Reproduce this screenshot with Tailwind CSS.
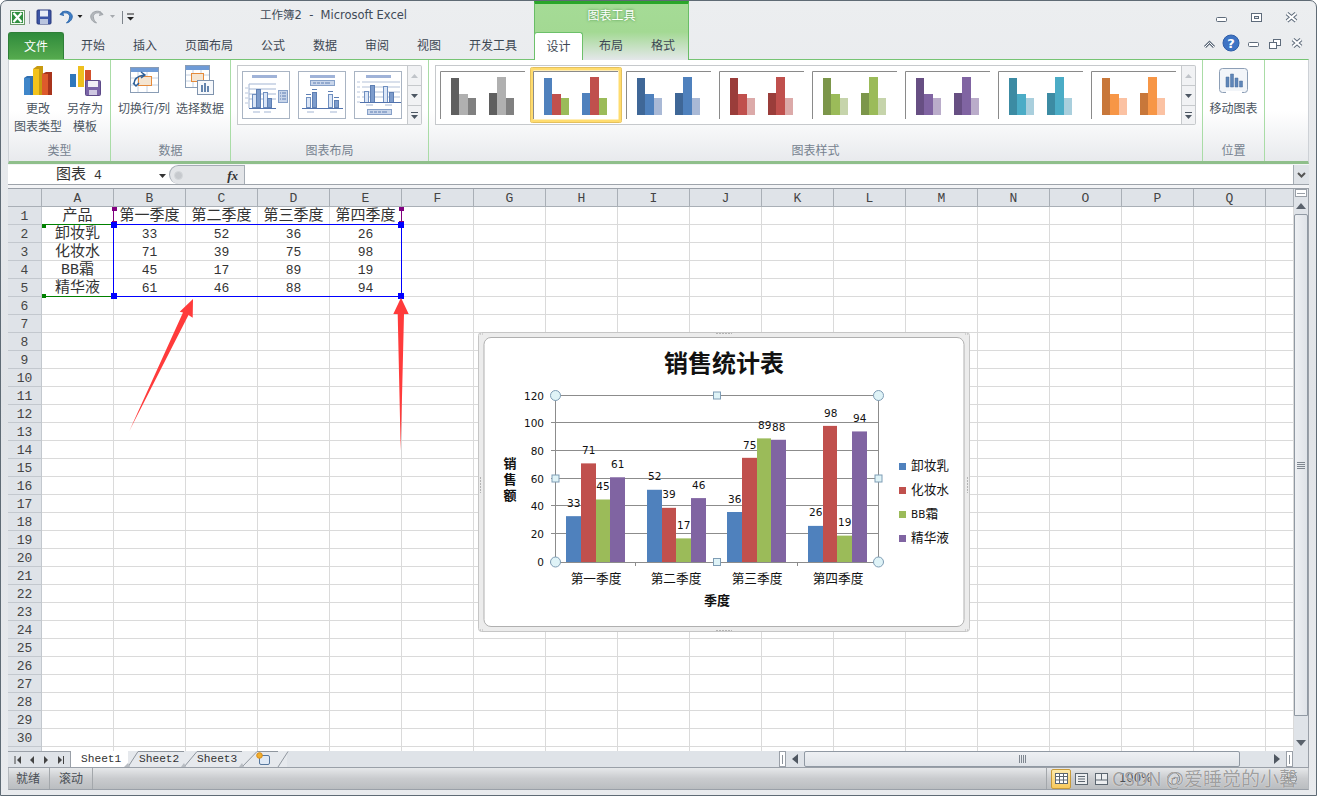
<!DOCTYPE html>
<html lang="zh-CN">
<head>
    <meta charset="UTF-8">
    <title>工作簿2 - Microsoft Excel</title>
    <script src="https://cdn.jsdelivr.net/npm/@tailwindcss/browser@4"></script>
</head>
<body class="w-[1317px] h-[797px] overflow-hidden bg-white font-['DejaVu_Sans','Noto_Sans_CJK_SC',sans-serif] text-[12px] text-[#44505e]">
<div class="relative w-[1317px] h-[797px]">
    <!-- window frame -->
    <div class="relative h-[796px] border border-[#5f6b75] rounded-t-[7px] px-[7px] bg-gradient-to-b from-[#eceef0] via-[#e0e3e7] to-[#e9ebee] flex flex-col">

        <!-- chart tools context tab -->
        <div class="absolute left-[533px] top-0 w-[155px] h-[59px] border-x border-[#69bd66] border-t-[3px] border-t-[#2aa62a] bg-gradient-to-b from-[#a5db96] via-[#a3d993] to-[#e4e7ea] text-center">
            <span class="block mt-[3px] text-white text-[12px] leading-[18px] [text-shadow:0_0_3px_#3d8a3d]">图表工具</span>
        </div>

        <!-- title row -->
        <div class="relative h-[31px] flex items-center shrink-0">
            <div class="w-[252px] shrink-0 flex">
                <svg width="130" height="20" viewBox="8 9 130 20">
                    <rect x="10.5" y="12.5" width="14" height="14" fill="#f4faf2" stroke="#6b9a6b"/>
                    <rect x="12" y="14" width="11" height="11" fill="#2f8f3f"/>
                    <path d="M13.5 15l8 9M21.5 15l-8 9" stroke="#fff" stroke-width="2.2"/>
                    <path d="M29.5 13v13" stroke="#a4a9ae"/>
                    <rect x="37" y="12" width="14" height="14" rx="1" fill="#3c55a5" stroke="#29397c"/>
                    <rect x="40" y="12.5" width="8" height="6" fill="#e8edf6"/>
                    <rect x="40" y="21" width="8" height="5" fill="#b9c4de"/>
                    <path d="M63 13.5l-3 3 4 1M60.5 16c6-3 10 0 9 4-.4 2-1.5 3.5-3 5 4-1 6-4 5.700-7-.5-4-6-6-10-4" fill="#3f7fc7" stroke="#2f69ad"/>
                    <path d="M77.500 17h5l-2.500 3z" fill="#222"/>
                    <path d="M102 13.500l3 3-4 1M104.500 16c-6-3-10 0-9 4 .4 2 1.500 3.500 3 5-4-1-6-4-5.700-7 .5-4 6-6 10-4" fill="#b5b9bd" stroke="#a0a5aa" transform="translate(-2 0)"/>
                    <path d="M110 17h5l-2.500 3z" fill="#a6aaae"/>
                    <path d="M122.500 13v13" stroke="#7d848b"/>
                    <path d="M127 16h7" stroke="#222"/>
                    <path d="M127 19h7l-3.500 3.500z" fill="#222"/>
                </svg>
            </div>
            <span class="mt-[-1px] text-[11.500px] whitespace-pre text-[#3f4a57]">工作簿2  -  Microsoft Excel</span>
            <svg class="ml-auto mr-[5px]" width="90" height="20" viewBox="1214 8 90 20">
                <rect x="1216.500" y="18.500" width="10" height="4" rx="1" fill="#fff" stroke="#5e6b7b"/>
                <rect x="1251.500" y="14.500" width="10" height="8" fill="#fff" stroke="#5e6b7b"/>
                <rect x="1254.500" y="17.500" width="4" height="2" fill="#e4e7ea" stroke="#5e6b7b"/>
                <path d="M1287 14.500l9 7.500M1296 14.500l-9 7.500" stroke="#5e6b7b" stroke-width="4"/>
                <path d="M1287 14.500l9 7.500M1296 14.500l-9 7.500" stroke="#fff" stroke-width="2"/>
            </svg>
        </div>

        <!-- tab row -->
        <div class="relative z-10 h-[27px] flex shrink-0 text-[12px] leading-[28px] text-[#3d4753]">
            <div class="w-[56px] h-[27px] text-center text-white rounded-t-[3px] border border-[#2f7f38] border-b-0 bg-gradient-to-b from-[#2f8b3c] to-[#55aa4e]">文件</div>
            <div class="w-[3px]"></div>
            <div class="w-[52px] text-center">开始</div>
            <div class="w-[52px] text-center">插入</div>
            <div class="w-[76px] text-center">页面布局</div>
            <div class="w-[52px] text-center">公式</div>
            <div class="w-[52px] text-center">数据</div>
            <div class="w-[52px] text-center">审阅</div>
            <div class="w-[52px] text-center">视图</div>
            <div class="w-[76px] text-center">开发工具</div>
            <div class="w-[3px]"></div>
            <div class="w-[49px] h-[28px] text-center bg-white border border-[#6cc06a] border-b-0 rounded-t-[3px]">设计</div>
            <div class="w-[2px]"></div>
            <div class="w-[52px] text-center">布局</div>
            <div class="w-[52px] text-center">格式</div>
            <svg class="ml-auto mr-[5px]" width="102" height="22" viewBox="1203 34 102 22">
                <path d="M1206 49l4.500-4.500 4.500 4.500" fill="none" stroke="#5e6b7b" stroke-width="3"/>
                <path d="M1206 49l4.500-4.500 4.500 4.500" fill="none" stroke="#fff" stroke-width="1"/>
                <circle cx="1232" cy="45" r="8" fill="#3f74c4" stroke="#2f5ea8"/>
                <text x="1232" y="50" text-anchor="middle" font-size="13" font-weight="700" fill="#fff">?</text>
                <rect x="1249.500" y="44.500" width="10" height="4" rx="1" fill="#fff" stroke="#5e6b7b"/>
                <rect x="1274.500" y="41.500" width="7" height="6" fill="#fff" stroke="#5e6b7b"/>
                <rect x="1270.500" y="44.500" width="7" height="6" fill="#fff" stroke="#5e6b7b"/>
                <path d="M1294 41.500l8 7M1302 41.500l-8 7" stroke="#5e6b7b" stroke-width="4"/>
                <path d="M1294 41.500l8 7M1302 41.500l-8 7" stroke="#fff" stroke-width="2"/>
            </svg>
        </div>

        <!-- ribbon -->
        <div class="h-[105px] shrink-0 flex border-t border-t-[#76c473] border-b-[3px] border-b-[#8fbf8b] border-x border-x-[#cdd1d6] bg-gradient-to-b from-white via-white to-[#e8eaed] text-[#4b5561]">
            <!-- 类型 -->
            <div class="w-[102px] shrink-0 flex flex-col border-r border-[#a9dca6]">
                <div class="h-[82px] flex gap-[5px] pl-[5px] pt-[4px] leading-[18px] text-center">
                    <div class="w-[48px] flex flex-col items-center">
                        <svg class="h-[35px] mb-px shrink-0" width="30" height="35" viewBox="23 64 30 35">
                            <path d="M24 78l3-2h6v19h-9z" fill="#2f6fb0"/><path d="M24 78h6v17h-6z" fill="#3f86c9"/>
                            <path d="M33 69l4-3h6v29H33z" fill="#c79a10"/><path d="M33 69h6v26h-6z" fill="#f2c21c"/>
                            <path d="M42 74l4-2h6v23H42z" fill="#a8341c"/><path d="M42 74h6v21h-6z" fill="#dd5a2c"/>
                        </svg>
                        <span>更改</span>
                        <span class="whitespace-nowrap">图表类型</span>
                    </div>
                    <div class="w-[36px] flex flex-col items-center">
                        <svg class="h-[35px] mb-px shrink-0" width="32" height="35" viewBox="69 64 32 35">
                            <path d="M70 74h6v13h-6z" fill="#2f78bd"/>
                            <path d="M78 66h6v21h-6z" fill="#eec01e"/>
                            <path d="M85 70h6v15h-6z" fill="#d2502c"/>
                            <rect x="85.500" y="80.500" width="15" height="15" rx="1" fill="#7a64a8" stroke="#5d4a88"/>
                            <rect x="88" y="81" width="10" height="6" fill="#f0eef6"/>
                            <rect x="89" y="90" width="8" height="5" fill="#cfc8e2"/>
                        </svg>
                        <span class="whitespace-nowrap">另存为</span>
                        <span>模板</span>
                    </div>
                </div>
                <div class="h-[19px] leading-[19px] text-center text-[#76828f]">类型</div>
            </div>
            <!-- 数据 -->
            <div class="w-[120px] shrink-0 flex flex-col border-r border-[#a9dca6]">
                <div class="h-[82px] flex gap-[6px] pl-[7px] pt-[4px] leading-[18px] text-center">
                    <div class="w-[52px] flex flex-col items-center">
                        <svg class="h-[35px] mb-px shrink-0" width="30" height="35" viewBox="129 64 30 35">
                            <rect x="130.500" y="67.500" width="28" height="25" fill="#fff" stroke="#8a9db5"/>
                            <rect x="131" y="68" width="27" height="4" fill="#6f9bd6"/>
                            <path d="M138 72v20M147 72v20M131 78h27M131 85h27" stroke="#c6d2e2"/>
                            <rect x="138.500" y="76.500" width="13" height="9" fill="#f4e5d2" stroke="#e58a3a"/>
                            <path d="M134 84c0-5 4-8 10-9M141 72l4 3-4 3" fill="none" stroke="#2f6099" stroke-width="1.500"/>
                            <path d="M133 83l3 3 3-3" fill="none" stroke="#2f6099" stroke-width="1.500"/>
                        </svg>
                        <span class="whitespace-nowrap">切换行/列</span>
                    </div>
                    <div class="w-[48px] flex flex-col items-center">
                        <svg class="h-[35px] mb-px shrink-0" width="30" height="35" viewBox="185 64 30 35">
                            <rect x="185.500" y="65.500" width="24" height="22" fill="#fff" stroke="#8a9db5"/>
                            <rect x="186" y="66" width="23" height="4" fill="#6f9bd6"/>
                            <path d="M193 70v17M201 70v17M186 75h23M186 81h23" stroke="#c6d2e2"/>
                            <rect x="191.500" y="73.500" width="12" height="8" fill="#f4e5d2" stroke="#e58a3a"/>
                            <rect x="197.500" y="80.500" width="16" height="14" fill="#f6f8fb" stroke="#7f93ad"/>
                            <path d="M201 85h2v7h-2zM204 83h2v9h-2zM207 86h2v6h-2z" fill="#6484ad"/>
                        </svg>
                        <span class="whitespace-nowrap">选择数据</span>
                    </div>
                </div>
                <div class="h-[19px] leading-[19px] text-center text-[#76828f]">数据</div>
            </div>
            <!-- 图表布局 -->
            <div class="w-[198px] shrink-0 flex flex-col border-r border-[#a9dca6]">
                <div class="h-[82px] pl-[6px] pt-[5px]">
                    <div class="w-[185px] h-[60px] flex">
                        <div class="w-[171px] h-[60px] border border-[#c6c9cc] bg-white">
                            <svg width="169" height="58" viewBox="238 66 169 58">
                                <g fill="none" stroke="#a9b4c3"><rect x="242.500" y="71.500" width="47" height="47"/><rect x="298.500" y="71.500" width="47" height="47"/><rect x="354.500" y="71.500" width="47" height="47"/></g>
                                <!-- layout 1 -->
                                <rect x="252" y="75" width="25" height="3" fill="#a0b3d8"/>
                                <path d="M249 84h27M249 89h27M249 94h27M249 99h27M249 84v24" stroke="#a3b5d3" fill="none"/>
                                <path d="M245 88h3M245 93h3M245 98h3M245 103h3" stroke="#b9c6dc"/>
                                <rect x="252.500" y="94.500" width="4" height="13" fill="#dbe6f7" stroke="#6f8fc0"/>
                                <rect x="256.500" y="89.500" width="4" height="18" fill="#7d9ccc" stroke="#5e7fb3"/>
                                <rect x="263.500" y="92.500" width="4" height="15" fill="#dbe6f7" stroke="#6f8fc0"/>
                                <rect x="267.500" y="98.500" width="4" height="9" fill="#7d9ccc" stroke="#5e7fb3"/>
                                <path d="M249 108.500h27" stroke="#5273ad"/>
                                <path d="M253 112h7M264 112h7" stroke="#a3b5d3"/>
                                <rect x="278.500" y="90.500" width="9" height="12" fill="#c8d5ea" stroke="#86a0c8"/>
                                <path d="M280 93h1M282 93h4M280 96h1M282 96h4M280 99h1M282 99h4" stroke="#5e7fb3"/>
                                <!-- layout 2 -->
                                <rect x="310" y="75" width="25" height="3" fill="#a0b3d8"/>
                                <rect x="310.500" y="80.500" width="24" height="5" fill="#c8d5ea" stroke="#86a0c8"/>
                                <path d="M313 83h3M317 83h3M321 83h3M325 83h5" stroke="#5e7fb3"/>
                                <rect x="306.500" y="97.500" width="4" height="10" fill="#dbe6f7" stroke="#6f8fc0"/>
                                <rect x="312.500" y="92.500" width="4" height="15" fill="#7d9ccc" stroke="#5e7fb3"/>
                                <rect x="328.500" y="94.500" width="4" height="13" fill="#dbe6f7" stroke="#6f8fc0"/>
                                <rect x="334.500" y="100.500" width="4" height="7" fill="#7d9ccc" stroke="#5e7fb3"/>
                                <path d="M306 94.500h5M312 89.500h5M328 91.500h5M334 97.500h5" stroke="#5e7fb3"/>
                                <path d="M302 108.500h41" stroke="#5273ad"/>
                                <path d="M307 112h7M330 112h7" stroke="#a3b5d3"/>
                                <!-- layout 3 -->
                                <rect x="366" y="75" width="25" height="3" fill="#a0b3d8"/>
                                <path d="M362 82h38M362 87h38M362 92h38M362 97h38" stroke="#b3c1d8"/>
                                <path d="M357 82h3M357 87h3M357 92h3M357 97h3M357 102h3" stroke="#b9c6dc"/>
                                <rect x="364.500" y="91.500" width="4" height="11" fill="#dbe6f7" stroke="#6f8fc0"/>
                                <rect x="370.500" y="85.500" width="4" height="17" fill="#7d9ccc" stroke="#5e7fb3"/>
                                <rect x="383.500" y="86.500" width="4" height="16" fill="#dbe6f7" stroke="#6f8fc0"/>
                                <rect x="389.500" y="92.500" width="4" height="10" fill="#7d9ccc" stroke="#5e7fb3"/>
                                <path d="M360 102.500h41" stroke="#5273ad"/>
                                <path d="M366 105h7M385 105h7" stroke="#a3b5d3"/>
                                <rect x="367.500" y="109.500" width="24" height="5" fill="#c8d5ea" stroke="#86a0c8"/>
                                <path d="M370 112h3M374 112h3M378 112h3M382 112h5" stroke="#5e7fb3"/>
                            </svg>
                        </div>
                        <div class="w-[14px] h-[60px] flex flex-col border border-l-0 border-[#c6c9cc] rounded-r-[2px] bg-[#f1f2f4]">
                            <div class="h-[20px] flex items-center justify-center border-b border-[#c6c9cc]"><svg width="7" height="4"><path d="M0 4h7L3.500 0z" fill="#c0c4c9"/></svg></div>
                            <div class="h-[20px] flex items-center justify-center border-b border-[#c6c9cc]"><svg width="7" height="4"><path d="M0 0h7L3.500 4z" fill="#4d5763"/></svg></div>
                            <div class="h-[18px] flex items-center justify-center"><svg width="7" height="7"><path d="M0 .5h7" stroke="#4d5763"/><path d="M0 3h7L3.500 7z" fill="#4d5763"/></svg></div>
                        </div>
                    </div>
                </div>
                <div class="h-[19px] leading-[19px] text-center text-[#76828f]">图表布局</div>
            </div>
            <!-- 图表样式 -->
            <div class="w-[774px] shrink-0 flex flex-col border-r border-[#a9dca6]">
                <div class="h-[82px] pl-[6px] pt-[5px]">
                    <div class="w-[761px] h-[60px] flex">
                        <div class="w-[747px] h-[60px] border border-[#c6c9cc] bg-white">
                            <svg id="styleThumbs" width="745" height="58" viewBox="436 66 745 58"></svg>
                        </div>
                        <div class="w-[14px] h-[60px] flex flex-col border border-l-0 border-[#c6c9cc] rounded-r-[2px] bg-[#f1f2f4]">
                            <div class="h-[20px] flex items-center justify-center border-b border-[#c6c9cc]"><svg width="7" height="4"><path d="M0 4h7L3.500 0z" fill="#c0c4c9"/></svg></div>
                            <div class="h-[20px] flex items-center justify-center border-b border-[#c6c9cc]"><svg width="7" height="4"><path d="M0 0h7L3.500 4z" fill="#4d5763"/></svg></div>
                            <div class="h-[18px] flex items-center justify-center"><svg width="7" height="7"><path d="M0 .5h7" stroke="#4d5763"/><path d="M0 3h7L3.500 7z" fill="#4d5763"/></svg></div>
                        </div>
                    </div>
                </div>
                <div class="h-[19px] leading-[19px] text-center text-[#76828f]">图表样式</div>
            </div>
            <!-- 位置 -->
            <div class="w-[62px] shrink-0 flex flex-col border-r border-[#a9dca6]">
                <div class="h-[82px] pt-[4px] leading-[18px] text-center flex flex-col items-center">
                    <svg class="h-[35px] mb-px shrink-0" width="32" height="35" viewBox="1218 64 32 35">
                        <rect x="1219.500" y="68.500" width="28" height="24" rx="3" fill="#f2f5f9" stroke="#8d9fb6"/>
                        <path d="M1226 92.500h16" stroke="#fff" stroke-width="3"/>
                        <path d="M1226 87V77h3v10zM1230.500 87V74h3v13zM1235 87V78h3v9zM1239.500 87v-6h3v6z" fill="#5f86b8" stroke="#4a6f9f" stroke-width=".5"/>
                    </svg>
                    <span class="whitespace-nowrap">移动图表</span>
                </div>
                <div class="h-[19px] leading-[19px] text-center text-[#76828f]">位置</div>
            </div>
        </div>

        <!-- formula bar -->
        <div class="h-[24px] shrink-0 pt-px bg-[#f3f4f6]">
            <div class="h-[20px] flex bg-white border-b border-[#9ea4ab]">
                <div class="w-[161px] shrink-0 flex items-center pl-[48px] pt-[2px] font-['Liberation_Mono','Noto_Sans_CJK_SC',monospace] text-[15px] leading-[18px] text-[#333]">
                    <span>图表</span><span class="ml-[8px] text-[13px]">4</span>
                    <svg class="ml-auto mr-[3px]" width="7" height="4"><path d="M0 0h7L3.500 4z" fill="#333"/></svg>
                </div>
                <div class="w-[76px] shrink-0 flex items-center justify-between rounded-l-[10px] border border-[#a5acb4] border-b-0 bg-[#e3e5e8] pl-[4px] pr-[6px]">
                    <span class="w-[9px] h-[9px] rounded-full bg-[#c6c9cd] border border-[#d4d7da]"></span>
                    <span class="font-['Liberation_Serif',serif] italic font-bold text-[13px] leading-[13px] text-[#333]">fx</span>
                </div>
                <div class="flex-1"></div>
                <div class="w-[16px] shrink-0 flex items-center justify-center bg-[#dfe3e8] border-l border-[#a5acb4]">
                    <svg width="9" height="6"><path d="M1 1l3.500 3.500L8 1" fill="none" stroke="#555" stroke-width="2"/></svg>
                </div>
            </div>
        </div>

        <!-- sheet + vertical scrollbar -->
        <div class="h-[563px] shrink-0 flex border-t border-[#9aa0a8]">
            <div id="sheet" class="w-[1286px] h-[562px] shrink-0 overflow-hidden grid grid-cols-[34px_repeat(17,72px)_28px] auto-rows-[18px] bg-white font-['Liberation_Mono','Noto_Sans_CJK_SC',monospace] text-[#333]"></div>
            <div class="w-[15px] h-[562px] flex flex-col bg-[#dfe3e8] border-r border-[#9aa0a8]">
                <div class="h-[8px] mx-[1px] bg-white border border-[#9aa0a8] flex items-center justify-center"><span class="w-[8px] h-px bg-[#9aa0a8]"></span></div>
                <div class="h-[17px] flex items-center justify-center"><svg width="10" height="6"><path d="M0 6h10L5 0z" fill="#5a626c"/></svg></div>
                <div class="h-[502px] rounded-t-[2px] border border-[#9099a3] border-r-[#9099a3] bg-gradient-to-r from-[#eef0f3] to-[#dfe3e8] flex items-center justify-center">
                    <svg width="8" height="7"><path d="M0 .5h8M0 2.500h8M0 4.500h8M0 6.500h8" stroke="#7f8790"/></svg>
                </div>
                <div class="flex-1 flex items-end justify-center pb-[5px]"><svg width="10" height="6"><path d="M0 0h10L5 6z" fill="#5a626c"/></svg></div>
            </div>
        </div>

        <!-- sheet tabs + horizontal scrollbar -->
        <div class="h-[17px] shrink-0 flex bg-[#dfe3e8] border-b border-[#9aa0a8] font-['Liberation_Mono',monospace] text-[11.200px] leading-[16px] text-[#333]">
            <div class="w-[63px] shrink-0 border-t border-r border-[#9aa0a8] flex items-center">
                <svg width="60" height="12" viewBox="8 755 60 12">
                    <path d="M15 757v8" stroke="#444"/><path d="M21 757v8l-4-4z" fill="#444"/>
                    <path d="M34 757v8l-4-4z" fill="#444"/>
                    <path d="M44 757v8l4-4z" fill="#444"/>
                    <path d="M58 757v8l4-4z" fill="#444"/><path d="M63.500 757v8" stroke="#444"/>
                </svg>
            </div>
            <div class="w-[57px] shrink-0 pl-[10px] bg-white">Sheet1</div>
            <div class="w-[58px] shrink-0 pl-[11px] bg-[#e6e9ed]">Sheet2</div>
            <div class="w-[57px] shrink-0 pl-[11px] bg-[#e6e9ed]">Sheet3</div>
            <div class="w-[44px] shrink-0 pl-[13px] pt-[1px] bg-[#e6e9ed]">
                <svg width="16" height="14" viewBox="0 0 16 14"><rect x="3.500" y="3.500" width="10" height="9" rx="1.500" fill="#dfe9f5" stroke="#56779e"/><circle cx="3.500" cy="3.500" r="2.800" fill="#f0b030" stroke="#d98a18"/></svg>
            </div>
            <div class="w-[492px] shrink-0"></div>
            <div class="w-[7px] shrink-0 bg-white border border-[#9aa0a8] flex items-center justify-center"><span class="w-px h-[9px] bg-[#8a9199]"></span></div>
            <div class="w-[18px] shrink-0 flex items-center justify-center"><svg width="6" height="10"><path d="M6 0v10L0 5z" fill="#4f5761"/></svg></div>
            <div class="w-[436px] shrink-0 rounded-l-[2px] rounded-r-[2px] border border-[#9099a3] bg-gradient-to-b from-[#eef0f3] to-[#dfe3e8] flex items-center justify-center">
                <svg width="7" height="8"><path d="M.5 0v8M2.500 0v8M4.500 0v8M6.500 0v8" stroke="#7f8790"/></svg>
            </div>
            <div class="w-[46px] shrink-0 flex items-center justify-end pr-[6px]"><svg width="6" height="10"><path d="M0 0v10l6-5z" fill="#4f5761"/></svg></div>
            <div class="w-[7px] shrink-0 bg-white border border-[#9aa0a8] flex items-center justify-center"><span class="w-px h-[9px] bg-[#8a9199]"></span></div>
            <div class="flex-1 border-r border-[#9aa0a8]"></div>
        </div>

        <!-- status bar -->
        <div class="h-[22px] shrink-0 flex items-center border-b border-[#9aa0a8] border-x border-x-[#b5b9be] bg-gradient-to-b from-[#e6e8ea] via-[#c9cbce] to-[#babdc0] text-[12px] text-[#4a4f55]">
            <div class="w-[41px] h-full pl-[7px] leading-[22px] border-r border-[#a3a7ab]">就绪</div>
            <div class="w-[43px] h-full pl-[9px] leading-[22px] border-r border-[#a3a7ab]">滚动</div>
            <div class="w-[954px] shrink-0 h-full border-r border-[#a3a7ab]"></div>
            <div class="ml-[4px] w-[20px] h-[20px] shrink-0 rounded-[2px] border border-[#c79a3a] bg-gradient-to-b from-[#fde9a8] to-[#f8c95a] flex items-center justify-center">
                <svg width="13" height="11"><rect x=".5" y=".5" width="12" height="10" fill="#fff" stroke="#5c6670"/><path d="M4.500 1v9M8.500 1v9M1 3.500h11M1 7h11" stroke="#5c6670"/></svg>
            </div>
            <svg class="ml-[3px] shrink-0" width="36" height="14" viewBox="0 0 36 14">
                <rect x="1.500" y="1.500" width="12" height="11" fill="#eceef0" stroke="#5c6670"/><path d="M4 4.500h7M4 7h7M4 9.500h7" stroke="#5c6670"/>
                <rect x="21.500" y="1.500" width="12" height="11" fill="#eceef0" stroke="#5c6670"/><path d="M27.500 2v6M22 8h11" stroke="#5c6670"/>
            </svg>
            <span class="ml-[9px] shrink-0 text-[11.500px]">100%</span>
            <span class="ml-[15px] shrink-0 w-[13px] h-[13px] rounded-full border border-[#7a7f85] bg-[#d6d8db] leading-[10px] text-center">-</span>
            <span class="ml-[104px] shrink-0 w-[13px] h-[13px] rounded-full border border-[#7a7f85] bg-[#d6d8db] leading-[10px] text-center">+</span>
        </div>
    </div>

    <!-- selection marks, arrows, tab slants -->
    <svg class="absolute left-0 top-0 pointer-events-none" width="1317" height="797" viewBox="0 0 1317 797">
        <g shape-rendering="crispEdges">
            <path d="M42 224.500h72M42 296.500h72" stroke="#008000"/>
            <path d="M113.500 207v17M401.500 207v17" stroke="#800080"/>
            <rect x="113.500" y="224.500" width="288" height="72" fill="none" stroke="#0000ff"/>
            <g fill="#008000"><rect x="42" y="224" width="4" height="4"/><rect x="42" y="294" width="4" height="4"/></g>
            <g fill="#800080"><rect x="112" y="207" width="5" height="4"/><rect x="399" y="207" width="5" height="4"/><rect x="112" y="221" width="5" height="3"/><rect x="399" y="221" width="5" height="3"/></g>
            <g fill="#0000ff"><rect x="111" y="222" width="6" height="6"/><rect x="398" y="222" width="6" height="6"/><rect x="111" y="293" width="6" height="6"/><rect x="398" y="293" width="6" height="6"/></g>
        </g>
        <path d="M129.300 431L183 312.500 179.700 311.700 193 299 192.700 317.700 188.500 315z" fill="#ff3b3b"/>
        <path d="M401 297.700L408.700 314H404L400.700 451 397.700 314H393.300z" fill="#ff3b3b"/>
        <path d="M128 767L138 751.500H184M184 767L197 751.500H242M242 767L257 751.500H278M278 767L288 751.500" fill="none" stroke="#8f969e"/>
        <path d="M124 767l4-4 2 4zM181 767l3-4 2 4zM239 767l3-4 2 4z" fill="#b7bcc2"/>
    </svg>

    <!-- embedded chart -->
    <svg class="absolute left-[478px] top-[332px] font-['DejaVu_Sans','Noto_Sans_CJK_SC',sans-serif]" width="492" height="300" viewBox="478 332 492 300">
        <rect x="478.500" y="332.500" width="491" height="299" rx="3" fill="#ececec" stroke="#c6c6c6"/>
        <path d="M716 333.500h16M716 630.500h16" stroke="#b4b4b4" stroke-dasharray="2 1"/>
        <path d="M480.500 477v16M967.500 477v16" stroke="#b4b4b4" stroke-dasharray="2 1"/>
        <path d="M480 334h3M965 334h3M480 630h3M965 630h3" stroke="#b4b4b4" stroke-dasharray="1 1"/>
        <rect x="484" y="337.500" width="480" height="289" rx="7" fill="#fff" stroke="#b0b0b0"/>
        <text x="724" y="372" text-anchor="middle" font-size="24" font-weight="700" fill="#111">销售统计表</text>
        <g stroke="#8c8c8c" fill="none">
            <path d="M555.500 395.500H878M555.500 422.500H878M555.500 450.500H878M555.500 478.500H878M555.500 505.500H878M555.500 533.500H878"/>
            <path d="M555.500 395V562M878.500 395V562M550 562.500H878.500"/>
            <path d="M551 395.500h5M551 422.500h5M551 450.500h5M551 478.500h5M551 505.500h5M551 533.500h5"/>
            <path d="M635.500 562v4M717.500 562v4M797.500 562v4M878.500 562v4"/>
        </g>
        <g id="chartBars"></g>
        <g font-size="10.500" fill="#111" text-anchor="end">
            <text x="544" y="399.500">120</text><text x="544" y="426.500">100</text><text x="544" y="454.500">80</text><text x="544" y="482.500">60</text><text x="544" y="509.500">40</text><text x="544" y="537.500">20</text><text x="544" y="566">0</text>
        </g>
        <g id="chartLabels" font-size="10.500" fill="#111" text-anchor="middle"></g>
        <g font-size="12.700" fill="#111" text-anchor="middle">
            <text x="596" y="583">第一季度</text><text x="676" y="583">第二季度</text><text x="757" y="583">第三季度</text><text x="838" y="583">第四季度</text>
        </g>
        <g font-size="13" font-weight="700" fill="#111" text-anchor="middle">
            <text x="717" y="605">季度</text>
            <text x="510" y="468">销</text><text x="510" y="484">售</text><text x="510" y="500">额</text>
        </g>
        <g fill="#111" font-size="12.700">
            <rect x="899" y="463" width="7" height="7" fill="#4f81bd"/><text x="911" y="470">卸妆乳</text>
            <rect x="899" y="487" width="7" height="7" fill="#c0504d"/><text x="911" y="494">化妆水</text>
            <rect x="899" y="511" width="7" height="7" fill="#9bbb59"/><text x="911" y="518"><tspan font-size="10.500">BB</tspan>霜</text>
            <rect x="899" y="535" width="7" height="7" fill="#8064a2"/><text x="911" y="542">精华液</text>
        </g>
        <g fill="#dff3f7" stroke="#7f9db5">
            <circle cx="555.500" cy="395.500" r="5"/><circle cx="878.500" cy="395.500" r="5"/><circle cx="555.500" cy="562" r="5"/><circle cx="878.500" cy="562" r="5"/>
            <rect x="713.500" y="392" width="7" height="7"/><rect x="713.500" y="558.500" width="7" height="7"/><rect x="552" y="475" width="7" height="7"/><rect x="875" y="475" width="7" height="7"/>
        </g>
    </svg>

    <!-- watermark -->
    <div class="absolute left-[1112px] top-[765px] text-[19px] leading-[26px] whitespace-nowrap text-[#777]/70 font-['Noto_Sans_CJK_SC',sans-serif] [text-shadow:0_0_1px_#fff]">CSDN @爱睡觉的小馨</div>
</div>

<script>
    // worksheet
    const sheet = document.getElementById('sheet');
    const cols = 'ABCDEFGHIJKLMNOPQ'.split('');
    const values = [
        ['产品', '第一季度', '第二季度', '第三季度', '第四季度'],
        ['卸妆乳', 33, 52, 36, 26],
        ['化妆水', 71, 39, 75, 98],
        ['BB霜', 45, 17, 89, 19],
        ['精华液', 61, 46, 88, 94]
    ];
    const headCell = 'bg-[#dfe3e8] border-r border-b border-[#a9afb6] text-center text-[13px] leading-[19px] text-[#444]';
    const rowCell = 'bg-[#dfe3e8] border-r border-b border-[#c3c8ce] text-center text-[13px] leading-[20px] text-[#444] overflow-hidden';
    const bodyCell = 'border-r border-b border-[#dadada] text-center leading-[20px] overflow-hidden whitespace-nowrap';

    function addCell(cls, text) {
        const d = document.createElement('div');
        d.className = cls;
        d.textContent = text;
        sheet.appendChild(d);
        return d;
    }

    addCell(headCell, '');
    cols.forEach(c => addCell(headCell, c));
    addCell(headCell, '');
    for (let r = 1; r <= 31; r++) {
        addCell(rowCell, r <= 30 ? r : '');
        for (let c = 0; c < 18; c++) {
            const v = values[r - 1] ? values[r - 1][c] : undefined;
            const cls = typeof v === 'number' ? bodyCell + ' text-[13px]' : bodyCell + ' text-[15px]';
            addCell(cls, v === undefined ? '' : v);
        }
    }

    // chart style thumbnails
    const svgNS = 'http://www.w3.org/2000/svg';
    const thumbs = document.getElementById('styleThumbs');
    const palettes = [
        ['#5f5f5f', '#b0b0b0', '#808080'],
        ['#4f81bd', '#c0504d', '#9bbb59'],
        ['#3f6797', '#4f81bd', '#a9b9d6'],
        ['#9a3d3a', '#c0504d', '#dcaaa9'],
        ['#7c964a', '#9bbb59', '#c6d4ab'],
        ['#674f83', '#8064a2', '#baacca'],
        ['#3c8ba3', '#4bacc6', '#a9cfdd'],
        ['#c8773a', '#f79646', '#fbc2a3']
    ];

    function add(parent, tag, attrs) {
        const el = document.createElementNS(svgNS, tag);
        for (const k in attrs) el.setAttribute(k, attrs[k]);
        parent.appendChild(el);
        return el;
    }

    add(thumbs, 'rect', { x: 530.5, y: 67.5, width: 91, height: 55, rx: 2, fill: 'none', stroke: '#c9a54c' });
    add(thumbs, 'rect', { x: 532, y: 69, width: 88, height: 52, fill: 'none', stroke: '#ffdc6e', 'stroke-width': 3 });
    palettes.forEach((p, i) => {
        const x = 440 + i * 93;
        add(thumbs, 'path', { d: `M${x + 0.5} 119V71.5H${x + 85}`, fill: 'none', stroke: '#8a8a8a' });
        // [left, width, top, colour index]
        [[11, 8, 78, 0], [19, 9, 94, 1], [28, 8, 98, 2], [49, 8, 93, 0], [57, 9, 77, 1], [66, 8, 98, 2]].forEach(b => {
            add(thumbs, 'rect', { x: x + b[0], y: b[2], width: b[1], height: 115 - b[2], fill: p[b[3]] });
        });
    });

    // chart bars and data labels
    const colours = ['#4f81bd', '#c0504d', '#9bbb59', '#8064a2'];
    const bars = [
        [566, 15, 33, 0, 573.7, 507], [581, 15, 71, 1, 588.7, 454], [596, 14, 45, 2, 603, 490], [610, 15, 61, 3, 617.7, 468],
        [647, 15, 52, 0, 654.7, 480], [662, 14, 39, 1, 669, 498], [676, 15, 17, 2, 683.7, 529], [691, 15, 46, 3, 698.7, 489],
        [727, 15, 36, 0, 734.7, 503], [742, 15, 75, 1, 749.7, 449], [757, 14, 89, 2, 764.7, 429], [771, 15, 88, 3, 778.7, 431],
        [808, 15, 26, 0, 815.7, 516], [823, 14, 98, 1, 830.7, 417], [837, 15, 19, 2, 844.7, 526], [852, 15, 94, 3, 859.7, 422]
    ];
    const barGroup = document.getElementById('chartBars');
    const labelGroup = document.getElementById('chartLabels');
    bars.forEach(b => {
        const h = b[2] * 1.389;
        add(barGroup, 'rect', { x: b[0], y: 562 - h, width: b[1], height: h, fill: colours[b[3]] });
        add(labelGroup, 'text', { x: b[4], y: b[5] }).textContent = b[2];
    });
</script>
</body>
</html>
